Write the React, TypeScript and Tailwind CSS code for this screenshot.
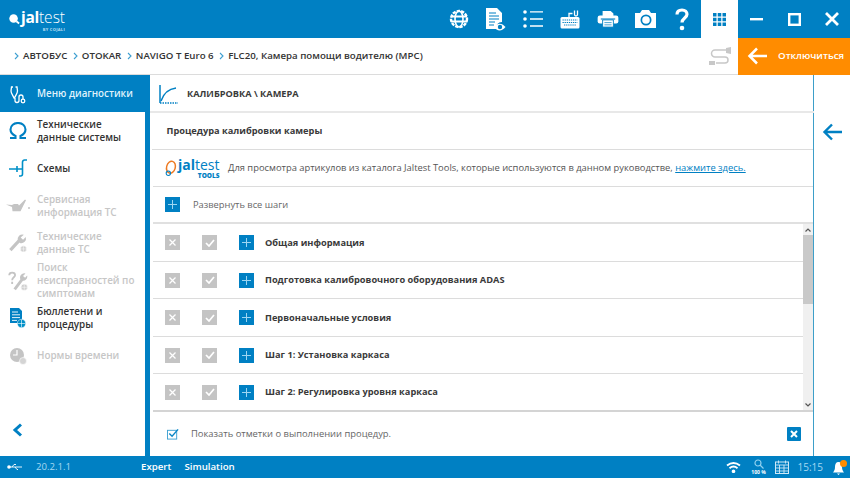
import React from "react";

const Blue = "#0080c3";

function Logo() {
  return (
    <div className="ml-[8px] flex flex-col items-end text-white leading-none">
      <div className="flex items-center h-[22px] mt-[1px]">
        <svg width="13" height="13" viewBox="0 0 14 14"><circle cx="6" cy="7" r="4.6" fill="#fff" /><path d="M9 10l3 2.400" stroke="#fff" strokeWidth="2" /></svg>
        <span className="text-[15.500px] font-bold tracking-[-0.3px]">jal</span>
        <span className="text-[15.500px] font-light">test</span>
      </div>
      <span className="mt-[-1px] text-[4px] font-bold tracking-[0.3px] text-[#b9dff2]">BY COJALI</span>
    </div>
  );
}

function TopIcons() {
  return (
    <div className="flex items-center h-full">
      <div className="w-[37.300px] flex justify-center">
        <svg width="20" height="20" viewBox="0 0 20 20" fill="none" stroke="#fff"><circle cx="10" cy="10" r="8" strokeWidth="2.400" strokeDasharray="3.200 1.200" /><path d="M2 7.500h16M2 12.500h16" strokeWidth="2.200" /><ellipse cx="10" cy="10" rx="4" ry="8" strokeWidth="1.600" /></svg>
      </div>
      <div className="w-[37.300px] flex justify-center">
        <svg width="22" height="24" viewBox="0 0 22 24"><path d="M1 1h11l5 5v9a6 6 0 0 0-6 7H1z" fill="#fff" /><path d="M4 6h7M4 9h10M4 12h10M4 15h6M4 18h5" stroke={Blue} strokeWidth="1.200" /><path d="M9 20c3-4.500 8-4.500 11.500 0-3.500 4.500-8.500 4.500-11.500 0z" fill="#fff" /><circle cx="15" cy="20" r="2.200" fill={Blue} /></svg>
      </div>
      <div className="w-[37.300px] flex justify-center">
        <svg width="20" height="20" viewBox="0 0 20 20" fill="#fff"><circle cx="2" cy="3" r="1.800" /><circle cx="2" cy="10" r="1.800" /><circle cx="2" cy="17" r="1.800" /><path d="M7 2.200h13v1.400H7zM7 9.300h13v1.400H7zM7 16.300h13v1.400H7z" /></svg>
      </div>
      <div className="w-[37.300px] flex justify-center">
        <svg width="20" height="20" viewBox="0 0 20 20" fill="none"><rect x="0.500" y="8" width="19" height="11.500" rx="1.500" fill="#fff" /><path d="M2.500 11h15M2.500 13.500h15M4 16h12" stroke={Blue} strokeWidth="1" strokeDasharray="1.300 0.800" /><path d="M9 8V4.500h3.500M14.500 1.500v4a1.500 1.500 0 0 0 3 0v-4" stroke="#fff" strokeWidth="1.300" /></svg>
      </div>
      <div className="w-[37.300px] flex justify-center">
        <svg width="24" height="18" viewBox="0 0 24 20"><path d="M6 1h9l3 3v4H6z" fill="#fff" /><rect x="0.500" y="6" width="23" height="9" rx="2.500" fill="#fff" /><path d="M4 10h16" stroke={Blue} strokeWidth="1.200" /><path d="M6 11h12v8H6z" fill="#fff" stroke={Blue} /><path d="M8 14h8M8 16.500h8" stroke={Blue} strokeWidth="0.800" /></svg>
      </div>
      <div className="w-[37.300px] flex justify-center">
        <svg width="23" height="18" viewBox="0 0 23 18"><path d="M1 3h5l2-3h7l2 3h5v15H1z" fill="#fff" /><circle cx="12" cy="10" r="5.500" fill={Blue} /><circle cx="12" cy="10" r="3.800" fill="#fff" /></svg>
      </div>
      <div className="w-[37.300px] flex justify-center">
        <svg width="14" height="23" viewBox="0 0 14 23" fill="none"><path d="M2 6.500C2 3.500 4 2 7 2s5 1.700 5 4.300c0 3.700-5 3.700-5 8.200" stroke="#fff" strokeWidth="3.200" /><circle cx="7" cy="20" r="2.300" fill="#fff" /></svg>
      </div>
    </div>
  );
}

function Breadcrumb() {
  const items = ["АВТОБУС", "OTOKAR", "NAVIGO T Euro 6", "FLC20, Камера помощи водителю (MPC)"];
  return (
    <div className="flex items-center ml-[14px] text-[9.700px] font-semibold text-[#333]">
      {items.map((t) => (
        <React.Fragment key={t}>
          <svg width="5" height="8" viewBox="0 0 5 8" fill="none" className="mr-[4px]"><path d="M1 1l3 3-3 3" stroke="#3d9fd1" strokeWidth="1.100" /></svg>
          <span className="mr-[5.500px] whitespace-nowrap">{t}</span>
        </React.Fragment>
      ))}
    </div>
  );
}

type SideProps = { icon: React.ReactNode; lines: string[]; on?: boolean };
function SideItem({ icon, lines, on }: SideProps) {
  return (
    <div className="flex items-center shrink-0 h-[37.500px]">
      <div className="w-[35px] mr-[2px] flex justify-center shrink-0">{icon}</div>
      <div className={`text-[9.900px] font-semibold leading-[13px] ${on ? "text-[#333]" : "text-[#c6c6c6]"}`}>
        {lines.map((l) => <div key={l} className="whitespace-nowrap">{l}</div>)}
      </div>
    </div>
  );
}

const Gray = "#c4c4c4";
function Globe() {
  return (
    <g>
      <circle cx="19.500" cy="19.500" r="4" fill="#cfcfcf" stroke="#fff" strokeWidth="0.800" />
      <path d="M15.500 19.500h8M19.500 15.500v8" stroke="#fff" strokeWidth="0.600" />
    </g>
  );
}

function Sidebar() {
  return (
    <div className="w-[150px] shrink-0 flex flex-col bg-[#0080c3]">
      <div className="h-[37px] pt-[2px] flex items-center text-white shrink-0">
        <div className="w-[35px] mr-[2px] flex justify-center">
          <svg width="16" height="18" viewBox="0 0 16 18" fill="none" stroke="#fff" strokeWidth="1.300"><path d="M3 1H1.500L1 5c0 2.500 2 4.500 3 7h0.500c1-2.500 3-4.500 3-7L7 1H5.500" /><path d="M5 12v2.500a2 2 0 0 0 4 0V11a2 2 0 0 1 4 0v2" /><circle cx="13" cy="15" r="1.800" /></svg>
        </div>
        <span className="text-[9.800px] font-semibold text-[#dff1fb] whitespace-nowrap">Меню диагностики</span>
      </div>
      <div className="flex-1 w-[144.500px] bg-white flex flex-col">
        <SideItem on lines={["Технические", "данные системы"]} icon={
          <svg width="18" height="17" viewBox="0 0 18 17" fill="none" stroke="#0080c3" strokeWidth="2.100"><path d="M1 16H6.500V14C3.200 12.300 1.500 10 1.500 7.500 1.500 3.500 5 1 9 1s7.500 2.500 7.500 6.500c0 2.500-1.700 4.800-5 6.500V16H17" /></svg>} />
        <SideItem on lines={["Схемы"]} icon={
          <svg width="18" height="18" viewBox="0 0 18 18" fill="none" stroke="#0090c8" strokeWidth="1.600"><path d="M0 10h13M8 7v6" /><path d="M18 1h-2.500a2 2 0 0 0-2 2v12a2 2 0 0 1-2 2H10" /></svg>} />
        <SideItem lines={["Сервисная", "информация ТС"]} icon={
          <svg width="24" height="13" viewBox="0 0 24 13"><path d="M0 5.500l6 .5 2-1h4l1 1.500 6-6 1 .7-5.500 11H6.500L6 8z" fill={Gray} /><circle cx="23" cy="9" r="1" fill={Gray} /></svg>} />
        <SideItem lines={["Технические", "данные ТС"]} icon={
          <svg width="19" height="20" viewBox="0 0 24 24" fill="none"><path d="M3 21L14 9" stroke={Gray} strokeWidth="4" /><path d="M12.500 9a6 6 0 0 1 7.500-7.500l-4 3.500 3 3 3.500-3.500A6 6 0 0 1 15 12z" fill={Gray} /><Globe /></svg>} />
        <SideItem lines={["Поиск", "неисправностей по", "симптомам"]} icon={
          <svg width="20" height="20" viewBox="0 0 24 24" fill="none"><path d="M1.500 5c0-4 7-4 7 0 0 2.500-3.500 2.500-3.500 6M5 13v2.500" stroke={Gray} strokeWidth="2.200" /><path d="M8 22L17 10" stroke={Gray} strokeWidth="3.500" /><path d="M15 10a5 5 0 0 1 6-7l-3 3 2.500 2 2.500-2.500a5 5 0 0 1-6 6z" fill={Gray} /><Globe /></svg>} />
        <SideItem on lines={["Бюллетени и", "процедуры"]} icon={
          <svg width="17" height="20" viewBox="0 0 17 20"><path d="M1 0h9l3 3v12H1z" fill="#0080c3" /><path d="M3 4h6M3 6.800h8M3 9.600h8M3 12.400h5" stroke="#fff" strokeWidth="0.900" /><circle cx="12.500" cy="15.500" r="4.200" fill="#0090c8" stroke="#fff" strokeWidth="0.500" /><path d="M8.500 15.500h8M12.500 11.500v8" stroke="#fff" strokeWidth="0.600" /></svg>} />
        <SideItem lines={["Нормы времени"]} icon={
          <svg width="18" height="18" viewBox="0 0 18 18"><circle cx="8" cy="8" r="7" fill={Gray} /><path d="M8 3v5H4" stroke="#fff" strokeWidth="1.200" fill="none" /><circle cx="14" cy="14" r="3.500" fill="#d4d4d4" stroke="#fff" strokeWidth="0.600" /></svg>} />
        <div className="flex-1 flex items-end pb-[19px] pl-[12px]">
          <svg width="11" height="14" viewBox="0 0 11 14" fill="none"><path d="M9 1.500L3 7l6 5.500" stroke="#0080c3" strokeWidth="3" /></svg>
        </div>
      </div>
    </div>
  );
}

function Tile({ kind }: { kind: "x" | "check" | "plus" }) {
  if (kind === "plus") {
    return (
      <div className="w-[15px] h-[15px] bg-[#0080c3] flex items-center justify-center shrink-0">
        <svg width="9" height="9" viewBox="0 0 9 9"><path d="M4.500 0v9M0 4.500h9" stroke="#9ed6f2" strokeWidth="1" /></svg>
      </div>
    );
  }
  return (
    <div className="w-[15px] h-[15px] bg-[#c4c4c4] flex items-center justify-center shrink-0">
      {kind === "x" ? (
        <svg width="7" height="7" viewBox="0 0 7 7"><path d="M0.500 0.500l6 6M6.500 0.500l-6 6" stroke="#fff" strokeWidth="1.300" /></svg>
      ) : (
        <svg width="10" height="8" viewBox="0 0 10 8" fill="none"><path d="M1 4l3 3 5-6" stroke="#fff" strokeWidth="1.700" /></svg>
      )}
    </div>
  );
}

function StepRow({ title, last, h }: { title: string; last?: boolean; h: string }) {
  return (
    <div className={`${h} flex items-center pl-[12px] ${last ? "" : "border-b border-[#dcdcdc]"}`}>
      <Tile kind="x" />
      <div className="w-[22px]" />
      <Tile kind="check" />
      <div className="w-[22px]" />
      <Tile kind="plus" />
      <span className="ml-[11px] text-[9.250px] font-bold text-[#3a3a3a] whitespace-nowrap">{title}</span>
    </div>
  );
}

function Content() {
  return (
    <div className="w-[664px] shrink-0 flex flex-col border-r border-[#3d9fc9]">
      <div className="h-[38px] pt-[2px] flex items-center border-b-2 border-[#e8e8e8] mr-[-1px] shrink-0">
        <svg width="19" height="19" viewBox="0 0 19 19" fill="none" className="ml-[9px]"><path d="M1 0v18" stroke="#0080c3" strokeWidth="1.500" /><path d="M1 18H19" stroke="#0080c3" strokeWidth="1.500" strokeDasharray="1.500 1" /><path d="M2 16C4 10 9 4 17 3" stroke="#0080c3" strokeWidth="1.500" /></svg>
        <span className="ml-[9px] text-[9.200px] font-bold text-[#3a3a3a] whitespace-nowrap">КАЛИБРОВКА \ КАМЕРА</span>
      </div>
      <div className="h-[37px] flex items-center pl-[14.500px] border-b border-[#dcdcdc] ml-[2px] shrink-0">
        <span className="text-[9.250px] font-bold text-[#3a3a3a]">Процедура калибровки камеры</span>
      </div>
      <div className="h-[37px] flex items-center pl-[11px] border-b border-[#dcdcdc] ml-[3px] shrink-0">
        <div className="flex items-center w-[64px] shrink-0">
          <svg width="13" height="19" viewBox="0 0 15 19" fill="none"><ellipse cx="8" cy="8" rx="5" ry="7" stroke="#ee7a22" strokeWidth="1.700" transform="rotate(15 8 8)" /><circle cx="5" cy="15" r="2.500" stroke="#0080c3" strokeWidth="1.200" /></svg>
          <div className="flex flex-col items-end ml-[1px] leading-none">
            <div className="text-[#0080c3] text-[14px] leading-[14px] whitespace-nowrap"><span className="font-bold">jal</span><span>test</span></div>
            <span className="text-[#0080c3] text-[6.500px] leading-[7px] font-extrabold">TOOLS</span>
          </div>
        </div>
        <span className="text-[9.370px] text-[#555] whitespace-nowrap">Для просмотра артикулов из каталога Jaltest Tools, которые используются в данном руководстве, <span className="text-[#0080c3] underline">нажмите здесь.</span></span>
      </div>
      <div className="h-[37px] flex items-center pl-[12px] border-b-2 border-[#e0e0e0] ml-[3px] shrink-0">
        <Tile kind="plus" />
        <span className="ml-[13px] text-[9.300px] text-[#666]">Развернуть все шаги</span>
      </div>
      <div className="flex h-[188px] shrink-0 ml-[3px] border-b-2 border-[#d4d4d4]">
        <div className="flex-1 flex flex-col">
          <StepRow h="h-[38px]" title="Общая информация" />
          <StepRow h="h-[37px]" title="Подготовка калибровочного оборудования ADAS" />
          <StepRow h="h-[38px]" title="Первоначальные условия" />
          <StepRow h="h-[37px]" title="Шаг 1: Установка каркаса" />
          <StepRow h="h-[36px]" title="Шаг 2: Регулировка уровня каркаса" last />
        </div>
        <div className="w-[10px] bg-[#f0f0f0] flex flex-col shrink-0">
          <div className="h-[11px] flex items-center justify-center">
            <svg width="6" height="4" viewBox="0 0 6 4" fill="none"><path d="M0.500 3.500L3 1l2.500 2.500" stroke="#555" strokeWidth="1.200" /></svg>
          </div>
          <div className="h-[69px] bg-[#c9c9c9]" />
          <div className="flex-1 flex items-end justify-center pb-[3px]">
            <svg width="6" height="4" viewBox="0 0 6 4" fill="none"><path d="M0.500 0.500L3 3l2.500-2.500" stroke="#555" strokeWidth="1.200" /></svg>
          </div>
        </div>
      </div>
      <div className="flex-1 flex items-center pl-[17px] pr-[12px]">
        <svg width="12" height="12" viewBox="0 0 13 12" fill="none"><rect x="0.500" y="2" width="10" height="9.500" stroke="#3a9fd1" /><path d="M2.500 5.500l3 3L12 1" stroke="#0a86c6" strokeWidth="1.500" /></svg>
        <span className="ml-[12px] text-[9.400px] text-[#666]">Показать отметки о выполнении процедур.</span>
        <div className="ml-auto w-[14px] h-[14px] rounded-[1px] bg-[#0080c3] flex items-center justify-center">
          <svg width="8" height="8" viewBox="0 0 8 8"><path d="M1 1l6 6M7 1L1 7" stroke="#fff" strokeWidth="2" /></svg>
        </div>
      </div>
    </div>
  );
}

export default function App() {
  return (
    <div className="w-[850px] h-[478px] flex flex-col overflow-hidden bg-white font-['Open_Sans',sans-serif]">
      <div className="h-[38px] shrink-0 bg-[#0080c3] flex items-center">
        <Logo />
        <div className="ml-auto h-full flex items-center">
          <TopIcons />
          <div className="w-[37px] h-full bg-white flex items-center justify-center">
            <svg width="13" height="13" viewBox="0 0 13 13" fill="#0080c3">
              <path d="M0 0h3.500v3.500H0zM4.750 0h3.500v3.500h-3.500zM9.500 0H13v3.500H9.500zM0 4.750h3.500v3.500H0zM4.750 4.750h3.500v3.500h-3.500zM9.500 4.750H13v3.500H9.500zM0 9.500h3.500V13H0zM4.750 9.500h3.500V13h-3.500zM9.500 9.500H13V13H9.500z" />
            </svg>
          </div>
          <div className="w-[37px] flex justify-center">
            <svg width="13" height="3" viewBox="0 0 13 3"><path d="M0 0h13v2.400H0z" fill="#fff" /></svg>
          </div>
          <div className="w-[38px] flex justify-center">
            <svg width="13" height="13" viewBox="0 0 13 13" fill="none"><rect x="1.200" y="1.200" width="10.600" height="10.600" stroke="#fff" strokeWidth="2.400" /></svg>
          </div>
          <div className="w-[37px] flex justify-center">
            <svg width="14" height="14" viewBox="0 0 14 14"><path d="M1 1l12 12M13 1L1 13" stroke="#fff" strokeWidth="2.800" /></svg>
          </div>
        </div>
      </div>

      <div className="h-[37px] shrink-0 flex items-center border-b border-[#dcdcdc]">
        <Breadcrumb />
        <div className="ml-auto flex items-center h-full">
          <svg width="24" height="20" viewBox="0 0 24 20" fill="none" className="mr-[6px]">
            <path d="M18 4H7a3.500 3.500 0 0 0 0 7h10a3 3 0 0 1 0 6H8" stroke="#c8c8c8" strokeWidth="1.500" />
            <path d="M18 2l5-1v7l-5-1z" fill="#c8c8c8" />
            <path d="M1 15h6v4H1z" fill="#c8c8c8" />
          </svg>
          <div className="w-[112px] h-[37px] bg-[#ff8c00] flex items-center text-white">
            <svg width="21" height="18" viewBox="0 0 21 18" fill="none" className="ml-[9px]"><path d="M20 9H3M10 1.500L2.500 9l7.500 7.500" stroke="#fff" strokeWidth="2.500" /></svg>
            <span className="ml-[10px] text-[9.700px] font-semibold whitespace-nowrap">Отключиться</span>
          </div>
        </div>
      </div>

      <div className="flex-1 flex min-h-0">
        <Sidebar />
        <Content />
        <div className="flex-1 flex justify-center pt-[48px] ml-[-1px]">
          <svg width="20" height="18" viewBox="0 0 20 18" fill="none"><path d="M20 9H3M10 1.500L2.500 9l7.500 7.500" stroke="#0080c3" strokeWidth="2.400" /></svg>
        </div>
      </div>

      <div className="h-[22px] shrink-0 bg-[#0080c3] flex items-center text-[9.700px] text-white">
        <svg width="16" height="8" viewBox="0 0 16 8" fill="#fff" className="ml-[7px]"><circle cx="2" cy="4" r="1.800" /><path d="M2 4h13M5 4l2-2.500h2M8 4l2 2.500h1" stroke="#fff" strokeWidth="0.900" fill="none" /></svg>
        <span className="ml-[13px] w-[105px] text-[9.600px] text-[#a5d9f2]">20.2.1.1</span>
        <span className="font-semibold">Expert</span>
        <span className="ml-[13px] font-semibold">Simulation</span>
        <div className="ml-auto flex items-center">
          <svg width="15" height="11" viewBox="0 0 15 11" fill="none" stroke="#fff" strokeWidth="1.900"><path d="M1 3.500c4-3 9-3 13 0M3.500 6.200c2.500-2 5.500-2 8 0" /><circle cx="7.500" cy="9.300" r="0.900" fill="#fff" /></svg>
          <div className="ml-[9px] w-[18px] flex flex-col items-center">
            <svg width="10" height="10" viewBox="0 0 10 10" fill="none" stroke="#8fd0f0" strokeWidth="1.200"><circle cx="4" cy="4" r="3" /><path d="M6 6l3.500 3.500" /></svg>
            <span className="text-[5px] font-bold leading-[6px] whitespace-nowrap">100 %</span>
          </div>
          <svg width="14" height="14" viewBox="0 0 14 14" fill="none" stroke="#cfe9f7" className="ml-[7px]"><rect x="0.500" y="2" width="13" height="11.500" strokeWidth="1" /><path d="M0.500 5h13M3.500 0.500v3M10.500 0.500v3M4.500 5v8M9 5v8M0.500 8h13M0.500 11h13" strokeWidth="0.900" /></svg>
          <span className="ml-[9px] text-[10px] text-[#a5d9f2]">15:15</span>
          <div className="ml-[10px] mr-[3px] w-[14px] h-[15px] flex items-end relative">
            <svg width="11" height="13" viewBox="0 0 11 13" fill="#fff"><path d="M5.500 0C8 0 9 2 9 5c0 3 1 4 2 5.500H0C1 9 2 8 2 5c0-3 1-5 3.500-5zM4 11.500h3L5.500 13z" /></svg>
            <span className="absolute right-0 top-0 w-[7px] h-[7px] rounded-full bg-[#ff8c00]" />
          </div>
        </div>
      </div>
    </div>
  );
}
